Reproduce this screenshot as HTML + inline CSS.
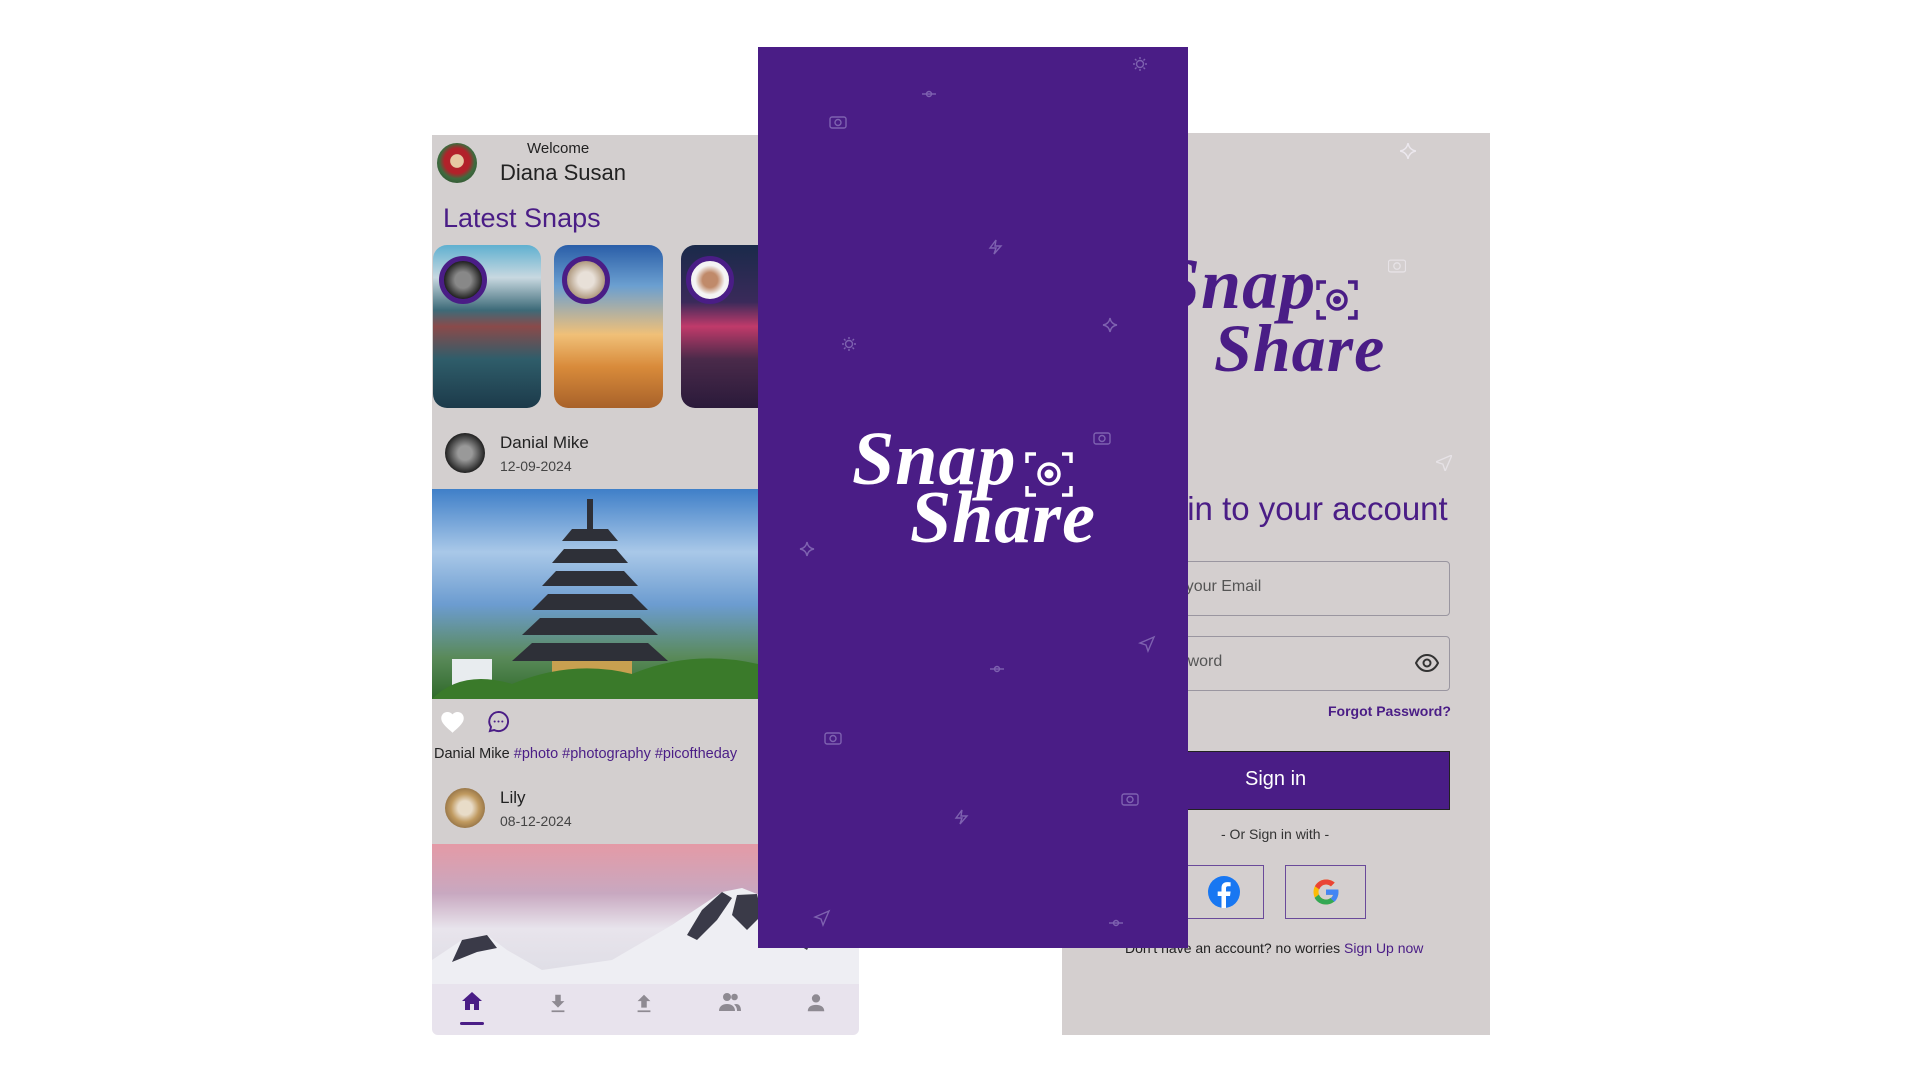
<!DOCTYPE html>
<html><head><meta charset="utf-8"><style>
*{margin:0;padding:0;box-sizing:border-box}
body{width:1920px;height:1080px;background:#fff;position:relative;overflow:hidden;font-family:"Liberation Sans",sans-serif}
.a{position:absolute}
.t{position:absolute;white-space:nowrap}
.circ{border-radius:50%}
.script{font-family:"Liberation Serif",serif;font-style:italic;font-weight:bold;letter-spacing:1px}
</style></head><body>

<!-- LEFT PANEL -->
<div class="a" style="left:432px;top:135px;width:326px;height:850px;background:#d3cfcf"></div>
<div class="a circ" style="left:437px;top:143px;width:40px;height:40px;background:radial-gradient(circle at 50% 45%,#e6c9a3 0 22%,#b2212a 24% 42%,#3d6b3e 60%,#2a3f28)"></div>
<div class="t" style="left:527px;top:140px;font-size:15px;color:#222">Welcome</div>
<div class="t" style="left:500px;top:160px;font-size:22px;color:#222">Diana Susan</div>
<div class="t" style="left:443px;top:203px;font-size:27px;color:#4a1d86;font-weight:500">Latest Snaps</div>

<div class="a" style="left:433px;top:245px;width:108px;height:163px;border-radius:14px;background:linear-gradient(180deg,#5fb0d0 0%,#c8d8e0 20%,#3d6a78 40%,#8a4a4a 50%,#2f5d6a 70%,#1c3a4a 100%)"></div>
<div class="a" style="left:554px;top:245px;width:109px;height:163px;border-radius:14px;background:linear-gradient(180deg,#2a5ea8 0%,#6b9fd0 25%,#f0c078 55%,#d88a3a 75%,#a8622a 100%)"></div>
<div class="a" style="left:681px;top:245px;width:77px;height:163px;border-radius:14px 0 0 14px;background:linear-gradient(180deg,#1a2a4a 0%,#3a2a5a 35%,#c03a6a 50%,#4a2a4a 70%,#2a1a3a 100%)"></div>
<div class="a circ" style="left:439px;top:256px;width:48px;height:48px;border:5px solid #4a1d86;background:radial-gradient(circle,#888 0 30%,#222 70%)"></div>
<div class="a circ" style="left:562px;top:256px;width:48px;height:48px;border:5px solid #4a1d86;background:radial-gradient(circle,#e8e0d8 0 30%,#b09a80 70%)"></div>
<div class="a circ" style="left:686px;top:256px;width:48px;height:48px;border:5px solid #4a1d86;background:radial-gradient(circle,#c08a6a 0 28%,#f4f4f4 55%)"></div>

<div class="a circ" style="left:445px;top:433px;width:40px;height:40px;background:radial-gradient(circle,#999 0 25%,#222 70%)"></div>
<div class="t" style="left:500px;top:433px;font-size:17px;color:#222">Danial Mike</div>
<div class="t" style="left:500px;top:458px;font-size:14px;color:#444">12-09-2024</div>

<div class="a" style="left:432px;top:489px;width:326px;height:210px;background:linear-gradient(180deg,#3f7fc8 0%,#a9c8e8 30%,#6c9cd0 55%,#5a8a5a 80%,#2f6a2a 100%)"></div>
<svg class="a" style="left:432px;top:489px" width="326" height="210" viewBox="0 0 326 210">
<g fill="#2e3038"><rect x="155" y="10" width="6" height="30"/><polygon points="140,40 176,40 186,52 130,52"/><polygon points="132,60 184,60 196,74 120,74"/><polygon points="124,82 192,82 206,97 110,97"/><polygon points="116,105 200,105 216,121 100,121"/><polygon points="108,129 208,129 226,146 90,146"/><polygon points="100,154 216,154 236,172 80,172"/></g>
<rect x="120" y="172" width="80" height="25" fill="#c8a050"/>
<rect x="20" y="170" width="40" height="30" fill="#e8ecef"/>
<path d="M0 210 Q30 180 80 195 Q140 170 200 185 Q260 160 326 175 L326 210Z" fill="#3a7a2a"/></svg>

<svg class="a" style="left:439px;top:709px" width="27" height="25" viewBox="0 0 24 22"><path d="M12 21 L10.5 19.6C5.4 15 2 11.9 2 8.1 2 5 4.4 2.6 7.5 2.6c1.7 0 3.4.8 4.5 2.1C13.1 3.4 14.8 2.6 16.5 2.6 19.6 2.6 22 5 22 8.1c0 3.8-3.4 6.9-8.5 11.5z" fill="#fff"/></svg>
<svg class="a" style="left:487px;top:710px" width="23" height="23" viewBox="0 0 24 24"><path d="M12 2a10 10 0 1 1-4.6 18.9L3 22l1.2-4.3A10 10 0 0 1 12 2z" fill="none" stroke="#4a1d86" stroke-width="2"/><circle cx="8" cy="12" r="1.1" fill="#4a1d86"/><circle cx="12" cy="12" r="1.1" fill="#4a1d86"/><circle cx="16" cy="12" r="1.1" fill="#4a1d86"/></svg>
<div class="t" style="left:434px;top:746px;font-size:14.5px;color:#222">Danial Mike <span style="color:#4a1d86">#photo #photography #picoftheday</span></div>

<div class="a circ" style="left:445px;top:788px;width:40px;height:40px;background:radial-gradient(circle,#e8dcc8 0 25%,#c09a60 50%,#8a6a40 80%)"></div>
<div class="t" style="left:500px;top:788px;font-size:17px;color:#222">Lily</div>
<div class="t" style="left:500px;top:813px;font-size:14px;color:#444">08-12-2024</div>

<div class="a" style="left:432px;top:844px;width:427px;height:141px;background:linear-gradient(180deg,#e49aa6 0%,#c8a8c0 35%,#e8e4ec 60%,#dcdce4 100%)"></div>
<svg class="a" style="left:432px;top:880px" width="427" height="105" viewBox="0 0 427 105">
<path d="M0 80 L30 60 L55 55 L75 70 L110 90 L180 80 L240 45 L290 12 L310 8 L340 20 L380 45 L427 60 L427 105 L0 105Z" fill="#eeeef3"/>
<g fill="#3a3a48"><path d="M30 60 L55 55 L65 68 L45 72 L20 82Z"/><path d="M270 30 L290 12 L300 18 L285 40 L265 60 L255 55Z"/><path d="M305 15 L325 14 L330 35 L315 50 L300 35Z"/><path d="M335 30 L355 35 L350 55 L335 60Z"/><path d="M365 45 L385 50 L375 70 L362 62Z"/></g></svg>

<div class="a" style="left:432px;top:984px;width:427px;height:51px;background:#e8e3ed;border-radius:0 0 6px 6px"></div>
<svg class="a" style="left:460px;top:990px" width="24" height="22" viewBox="0 0 24 22"><path d="M12 2 L2 11 H5 V20 H10 V14 H14 V20 H19 V11 H22Z" fill="#4a1d86"/></svg>
<div class="a" style="left:460px;top:1022px;width:24px;height:3px;background:#4a1d86;border-radius:2px"></div>
<svg class="a" style="left:547px;top:992px" width="22" height="22" viewBox="0 0 24 24"><path d="M9 3h6v7h4l-7 7-7-7h4zM5 20h14v2H5z" fill="#8e8a92"/></svg>
<svg class="a" style="left:633px;top:992px" width="22" height="22" viewBox="0 0 24 24"><path d="M9 17h6v-7h4l-7-7-7 7h4zM5 20h14v2H5z" fill="#8e8a92"/></svg>
<svg class="a" style="left:718px;top:991px" width="24" height="22" viewBox="0 0 24 22"><circle cx="9" cy="6" r="4" fill="#8e8a92"/><circle cx="16.5" cy="6" r="3.3" fill="#8e8a92"/><path d="M1 20c0-5 4-7 8-7s8 2 8 7z M18 13c3 0 5 2 5 7h-4c0-3-1-5-3-6.5z" fill="#8e8a92"/></svg>
<svg class="a" style="left:805px;top:992px" width="22" height="22" viewBox="0 0 24 24"><circle cx="12" cy="7" r="4.5" fill="#8e8a92"/><path d="M3 21c0-5 4-7 9-7s9 2 9 7z" fill="#8e8a92"/></svg>

<!-- RIGHT PANEL -->
<div class="a" style="left:1062px;top:133px;width:428px;height:902px;background:#d4cfcf"></div>
<div class="t script" style="left:1160px;top:248px;font-size:72px;color:#4a1d86;line-height:1">Snap</div>
<div class="t script" style="left:1214px;top:314px;font-size:68px;color:#4a1d86;line-height:1">Share</div>
<svg class="a" style="left:1316px;top:280px" width="42" height="40" viewBox="0 0 42 40"><path d="M2 10V2h8M32 2h8v8M40 30v8h-8M10 38H2v-8" stroke="#4a1d86" stroke-width="3.5" fill="none"/><circle cx="21" cy="20" r="9" fill="none" stroke="#4a1d86" stroke-width="3.5"/><circle cx="21" cy="20" r="4" fill="#4a1d86"/></svg>
<div class="t" style="left:1112px;top:490px;font-size:33px;color:#4a1d86">Sign in to your account</div>
<div class="a" style="left:1100px;top:561px;width:350px;height:55px;border:1px solid #9a96a0;border-radius:4px"></div>
<div class="t" style="left:1143px;top:578px;font-size:16px;color:#555">Enter your Email</div>
<div class="a" style="left:1100px;top:636px;width:350px;height:55px;border:1px solid #9a96a0;border-radius:4px"></div>
<div class="t" style="left:1152px;top:653px;font-size:16px;color:#555">Password</div>
<svg class="a" style="left:1415px;top:653px" width="24" height="20" viewBox="0 0 24 20"><path d="M1 10C4 4 8 2 12 2s8 2 11 8c-3 6-7 8-11 8S4 16 1 10z" fill="none" stroke="#333" stroke-width="2"/><circle cx="12" cy="10" r="3.5" fill="none" stroke="#333" stroke-width="2"/></svg>
<div class="t" style="left:1328px;top:703px;font-size:14px;color:#4a1d86;font-weight:bold">Forgot Password?</div>
<div class="a" style="left:1100px;top:751px;width:350px;height:59px;background:#4a1d86;border:1px solid #222"></div>
<div class="t" style="left:1245px;top:768px;font-size:20px;color:#fff">Sign in</div>
<div class="t" style="left:1221px;top:826px;font-size:14px;color:#333">- Or Sign in with -</div>
<div class="a" style="left:1183px;top:865px;width:81px;height:54px;border:1px solid #6a4a9a"></div>
<div class="a" style="left:1285px;top:865px;width:81px;height:54px;border:1px solid #6a4a9a"></div>
<svg class="a" style="left:1207px;top:875px" width="34" height="34" viewBox="0 0 34 34"><circle cx="17" cy="17" r="16" fill="#1877f2"/><path d="M19 33V21h4l.6-4.5H19v-3c0-1.3.4-2.2 2.2-2.2h2.4V7.3c-.4 0-1.8-.2-3.5-.2-3.4 0-5.6 2-5.6 5.8v3.6h-3.8V21h3.8v12z" fill="#fff"/></svg>
<svg class="a" style="left:1311px;top:877px" width="30" height="30" viewBox="0 0 48 48"><path d="M43.6 20H24v8.5h11.3C33.7 33.1 29.3 36 24 36c-6.6 0-12-5.4-12-12s5.4-12 12-12c3 0 5.8 1.1 7.9 3l6-6C34.5 5.9 29.5 4 24 4 13 4 4 13 4 24s9 20 20 20 20-9 20-20c0-1.3-.1-2.7-.4-4z" fill="#fbbc05"/><path d="M6.3 14.7l7 5.1C15.1 15.3 19.2 12 24 12c3 0 5.8 1.1 7.9 3l6-6C34.5 5.9 29.5 4 24 4 16.3 4 9.700 8.3 6.3 14.7z" fill="#ea4335"/><path d="M24 44c5.4 0 10.3-2 14-5.4l-6.5-5.5C29.5 34.9 26.9 36 24 36c-5.3 0-9.7-3.4-11.3-8.1l-7 5.4C9.1 39.6 16 44 24 44z" fill="#34a853"/><path d="M43.6 20H24v8.5h11.3c-.8 2.3-2.3 4.3-4.2 5.6l6.5 5.5C41.1 36.4 44 30.7 44 24c0-1.3-.1-2.7-.4-4z" fill="#4285f4"/></svg>
<div class="t" style="left:1125px;top:940px;font-size:14px;color:#222">Don't have an account? no worries <span style="color:#4a1d86">Sign Up now</span></div>

<!-- PURPLE CENTER -->
<div class="a" style="left:758px;top:47px;width:430px;height:901px;background:#4a1d86;overflow:hidden">
  <div class="t script" style="left:94px;top:374px;font-size:76px;color:#fff;line-height:1">Snap</div>
  <div class="t script" style="left:152px;top:434px;font-size:74px;color:#fff;line-height:1">Share</div>
  <svg class="a" style="left:267px;top:405px" width="48" height="45" viewBox="0 0 48 45"><path d="M2 11V2h9M37 2h9v9M46 34v9h-9M11 43H2v-9" stroke="#fff" stroke-width="3.5" fill="none"/><circle cx="24" cy="22" r="10" fill="none" stroke="#fff" stroke-width="3.5"/><circle cx="24" cy="22" r="4.5" fill="#fff"/></svg>
  <svg class="a" style="left:0;top:0" width="430" height="901" viewBox="0 0 430 901" fill="none" stroke="#7e62b0" stroke-width="1.4">
    <g transform="translate(72,68)"><rect x="0" y="2" width="16" height="11" rx="2"/><circle cx="8" cy="7.5" r="3"/></g>
    <g transform="translate(164,42)"><line x1="0" y1="5" x2="14" y2="5"/><circle cx="7" cy="5" r="2.5"/></g>
    <g transform="translate(375,10)"><circle cx="7" cy="7" r="3.5"/><path d="M7 0v2M7 12v2M0 7h2M12 7h2M2 2l1.5 1.5M10.5 10.5L12 12M2 12l1.5-1.5M10.5 3.5L12 2"/></g>
    <g transform="translate(230,193)"><path d="M8 0L2 8h6l-2 6 7-8H7z"/></g>
    <g transform="translate(345,271)"><path d="M7 0Q8 6 14 7Q8 8 7 14Q6 8 0 7Q6 6 7 0z"/></g>
    <g transform="translate(84,290)"><circle cx="7" cy="7" r="3.5"/><path d="M7 0v2M7 12v2M0 7h2M12 7h2M2 2l1.5 1.5M10.5 10.5L12 12M2 12l1.5-1.5M10.5 3.5L12 2"/></g>
    <g transform="translate(336,384)"><rect x="0" y="2" width="16" height="11" rx="2"/><circle cx="8" cy="7.5" r="3"/></g>
    <g transform="translate(42,495)"><path d="M7 0Q8 6 14 7Q8 8 7 14Q6 8 0 7Q6 6 7 0z"/></g>
    <g transform="translate(382,590)"><path d="M14 0L0 6l6 2 2 6z"/></g>
    <g transform="translate(232,617)"><line x1="0" y1="5" x2="14" y2="5"/><circle cx="7" cy="5" r="2.5"/></g>
    <g transform="translate(67,684)"><rect x="0" y="2" width="16" height="11" rx="2"/><circle cx="8" cy="7.5" r="3"/></g>
    <g transform="translate(364,745)"><rect x="0" y="2" width="16" height="11" rx="2"/><circle cx="8" cy="7.5" r="3"/></g>
    <g transform="translate(196,763)"><path d="M8 0L2 8h6l-2 6 7-8H7z"/></g>
    <g transform="translate(57,864)"><path d="M14 0L0 6l6 2 2 6z"/></g>
    <g transform="translate(351,871)"><line x1="0" y1="5" x2="14" y2="5"/><circle cx="7" cy="5" r="2.5"/></g>
  </svg>
</div>
<svg class="a" style="left:1400px;top:143px" width="16" height="16" viewBox="0 0 14 14" fill="none" stroke="#ece8ee" stroke-width="1.2"><path d="M7 0Q8 6 14 7Q8 8 7 14Q6 8 0 7Q6 6 7 0z"/></svg>
<svg class="a" style="left:1388px;top:258px" width="18" height="15" viewBox="0 0 16 14" fill="none" stroke="#e6e2e6" stroke-width="1.2"><rect x="0" y="2" width="16" height="11" rx="2"/><circle cx="8" cy="7.5" r="3"/></svg>
<svg class="a" style="left:1436px;top:455px" width="16" height="16" viewBox="0 0 14 14" fill="none" stroke="#e6e2e6" stroke-width="1.2"><path d="M14 0L0 6l6 2 2 6z"/></svg>
</body></html>
